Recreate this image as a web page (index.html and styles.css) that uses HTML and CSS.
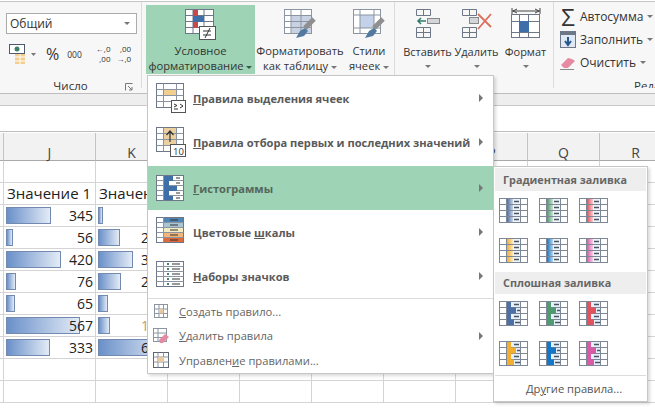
FILE: index.html
```html
<!DOCTYPE html>
<html lang="ru">
<head>
    <meta charset="UTF-8">
    <title>Условное форматирование</title>
    <link rel="stylesheet" href="styles.css">
</head>
<body>
    <svg class="defs" width="0" height="0">
        <defs>
            <linearGradient id="barFade" x1="0" x2="1" y1="0" y2="0">
                <stop offset="0" stop-color="#fff" stop-opacity="0"/>
                <stop offset="1" stop-color="#fff" stop-opacity=".7"/>
            </linearGradient>
            <symbol id="gallery" viewBox="0 0 30 25">
                <rect x=".5" y=".5" width="28" height="24" fill="#fff" stroke="#7d8795"/>
                <rect x="8" y="1" width="13" height="23" fill="#e6f0fa"/>
                <path d="M.5 6.500h28M.5 12.500h28M.5 18.500h28M7.500 .5v24M21.500 .5v24" stroke="#7d8795" fill="none"/>
                <path d="M8 1h4v5.500h5v6h-5v6h3v5.500H8z" fill="currentColor"/>
                <path d="M15 3.500h5M18 9.500h3M15 15.500h5M16 21.500h5" stroke="#4a5360" stroke-width="1.500"/>
            </symbol>
            <symbol id="galleryFade" viewBox="0 0 30 25">
                <rect x=".5" y=".5" width="28" height="24" fill="#fff" stroke="#7d8795"/>
                <rect x="8" y="1" width="13" height="23" fill="#eef4fa"/>
                <rect x="8" y="1" width="6" height="23" fill="currentColor"/>
                <rect x="8" y="1" width="6" height="23" fill="url(#barFade)"/>
                <path d="M.5 6.500h28M.5 12.500h28M.5 18.500h28M7.500 .5v24M21.500 .5v24" stroke="#7d8795" fill="none"/>
                <path d="M15 3.500h5M15 9.500h5M15 15.500h5M15 21.500h5" stroke="#4a5360" stroke-width="1.500"/>
            </symbol>
        </defs>
    </svg>

    <div class="top-rule"></div>
    <div class="ribbon">
        <section class="group group-number">
            <div class="format-select">Общий <span class="caret"></span></div>
            <div class="number-tools">
                <svg class="tool" width="27" height="20" viewBox="0 0 27 20">
                    <rect x=".5" y=".5" width="15" height="9" fill="#fff" stroke="#4c5a6c"/>
                    <circle cx="8" cy="5" r="2.500" fill="#3f7f6a"/>
                    <rect x="6" y="10" width="10" height="10" fill="#f2cf8f"/>
                    <path d="M6 13h10M6 17h10M11 10v10" stroke="#fff"/>
                    <path d="M22 9h5l-2.500 3z" fill="#777"/>
                </svg>
                <span class="percent">%</span>
                <span class="thousands">000</span>
                <span class="tool-sep"></span>
                <span class="decimals"><b>←,0</b><b>,00</b></span>
                <span class="decimals"><b>,00</b><b>→,0</b></span>
            </div>
            <div class="group-label">Число
                <svg class="launcher" width="8" height="8" viewBox="0 0 8 8"><path d="M.5 7.500v-7h7M3 3l4 4M7 4v3H4" fill="none" stroke="#777"/></svg>
            </div>
        </section>

        <section class="group group-styles">
            <div class="big-button active">
                <svg width="32" height="31" viewBox="0 0 32 31">
                    <rect x=".5" y=".5" width="28" height="24" fill="#fff" stroke="#6d7787"/>
                    <path d="M.5 6.500h28M.5 12.500h28M.5 18.500h28M8 .5v24M19 .5v24" stroke="#6d7787" fill="none"/>
                    <path d="M8 1h5v6H8zM8 13h5v6H8z" fill="#c8494a"/>
                    <path d="M8 7h11v6H8z" fill="#3f6fa8"/>
                    <rect x="14.500" y="17.500" width="16" height="13" fill="#fff" stroke="#555"/>
                    <path d="M18 22h8M18 26h8M25 19l-5 10" stroke="#333" fill="none"/>
                </svg>
                <span>Условное</span>
                <span>форматирование <i class="caret dark"></i></span>
            </div>
            <div class="big-button">
                <svg width="32" height="31" viewBox="0 0 32 31">
                    <rect x=".5" y=".5" width="27" height="24" fill="#fff" stroke="#8b95a2"/>
                    <rect x="7" y="7" width="20" height="17" fill="#c8d2e2"/>
                    <path d="M.5 6.500h27M.5 12.500h27M.5 18.500h27M7 .5v24M17 .5v24" stroke="#8b95a2" fill="none"/>
                    <path d="M30 10L21 19" stroke="#8f8f8f" stroke-width="5"/>
                    <path d="M21 19l-5 3-4 7 8-2 4-5z" fill="#52799f"/>
                </svg>
                <span>Форматировать</span>
                <span>как таблицу <i class="caret"></i></span>
            </div>
            <div class="big-button narrow">
                <svg width="32" height="31" viewBox="0 0 32 31">
                    <rect x=".5" y=".5" width="27" height="24" fill="#fff" stroke="#8b95a2"/>
                    <rect x="7" y="6" width="14" height="13" fill="#c3d2e8"/>
                    <path d="M.5 6h27M.5 19h27M7 .5v24M21 .5v24" stroke="#8b95a2" fill="none"/>
                    <path d="M30 10L21 19" stroke="#8f8f8f" stroke-width="5"/>
                    <path d="M21 19l-5 3-4 7 8-2 4-5z" fill="#52799f"/>
                </svg>
                <span>Стили</span>
                <span>ячеек <i class="caret"></i></span>
            </div>
        </section>

        <section class="group group-cells">
            <div class="cell-button">
                <svg width="30" height="30" viewBox="0 0 30 30">
                    <path d="M3.500 1.500h14v6h-14zM3.500 19.500h14v10h-14zM3.500 24.500h14M10.500 1.500v6M10.500 19.500v10" fill="none" stroke="#6d7787"/>
                    <path d="M13 13H5M8 10l-3 3 3 3" fill="none" stroke="#2f7d6b" stroke-width="1.500"/>
                    <rect x="14.500" y="10.500" width="12" height="5" fill="#d2d6db" stroke="#888"/>
                </svg>
                <span>Вставить</span><i class="caret"></i>
            </div>
            <div class="cell-button">
                <svg width="32" height="30" viewBox="0 0 32 30">
                    <path d="M1.500 1.500h14v6h-14zM1.500 19.500h14v10h-14zM1.500 24.500h14M8.500 1.500v6M8.500 19.500v10" fill="none" stroke="#6d7787"/>
                    <rect x="8.500" y="9.500" width="9" height="6" fill="#d2d6db" stroke="#888"/>
                    <path d="M17 6l13 13M30 6L17 21" stroke="#d9705a" stroke-width="1.800"/>
                </svg>
                <span>Удалить</span><i class="caret"></i>
            </div>
            <div class="cell-button">
                <svg width="30" height="32" viewBox="0 0 30 32">
                    <path d="M1 4h28M1 1v6M29 1v6M6 2L2 4l4 2M24 2l4 2-4 2" fill="none" stroke="#444"/>
                    <rect x=".5" y="7.500" width="28" height="23" fill="#fff" stroke="#6d7787"/>
                    <path d="M.5 14.500h28M.5 25.500h28M8.500 7.500v23M17.500 7.500v23" fill="none" stroke="#6d7787"/>
                    <rect x="8" y="14" width="10" height="11" fill="#3f6fa8"/>
                </svg>
                <span>Формат</span><i class="caret"></i>
            </div>
        </section>

        <section class="group group-edit">
            <div class="edit-row">
                <span class="sigma">Σ</span><span>Автосумма</span><i class="caret"></i>
            </div>
            <div class="edit-row">
                <svg width="16" height="17" viewBox="0 0 16 17">
                    <rect x=".5" y=".5" width="15" height="16" fill="#dfe8f3" stroke="#6d7787"/>
                    <rect x="1" y="1" width="14" height="3" fill="#6d7787"/>
                    <path d="M8 6v8M5 10l3 4 3-4" fill="none" stroke="#24588f" stroke-width="2"/>
                </svg>
                <span>Заполнить</span><i class="caret"></i>
            </div>
            <div class="edit-row">
                <svg width="16" height="14" viewBox="0 0 16 14">
                    <path d="M1 9l7-7 4 1 3 2-7 7H4z" fill="#e58aa2"/>
                    <path d="M0 13.500h14" stroke="#888"/>
                </svg>
                <span>Очистить</span><i class="caret"></i>
            </div>
            <div class="group-label edit-label">Редактирование</div>
        </section>
    </div>

    <div class="ribbon-gap"></div>
    <div class="formula-bar"></div>

    <div class="sheet">
        <div class="corner"></div>
        <div class="col-head wide">J</div>
        <div class="col-head">K</div>
        <div class="col-head"></div>
        <div class="col-head"></div>
        <div class="col-head"></div>
        <div class="col-head"></div>
        <div class="col-head">P</div>
        <div class="col-head">Q</div>
        <div class="col-head">R</div>

        <div class="row"><div class="cell first"></div><div class="cell wide"></div><div class="cell"></div><div class="cell"></div><div class="cell"></div><div class="cell"></div><div class="cell"></div><div class="cell"></div><div class="cell"></div><div class="cell"></div></div>
        <div class="row"><div class="cell first"></div><div class="cell wide value title">Значение 1</div><div class="cell value title">Значение 2</div><div class="cell"></div><div class="cell"></div><div class="cell"></div><div class="cell"></div><div class="cell"></div><div class="cell"></div><div class="cell"></div></div>
        <div class="row"><div class="cell first"></div><div class="cell wide value"><span class="bar" style="width:45px"></span>345</div><div class="cell value"><span class="bar" style="width:5px"></span>67</div><div class="cell"></div><div class="cell"></div><div class="cell"></div><div class="cell"></div><div class="cell"></div><div class="cell"></div><div class="cell"></div></div>
        <div class="row"><div class="cell first"></div><div class="cell wide value"><span class="bar" style="width:7px"></span>56</div><div class="cell value"><span class="bar" style="width:22px"></span>234</div><div class="cell"></div><div class="cell"></div><div class="cell"></div><div class="cell"></div><div class="cell"></div><div class="cell"></div><div class="cell"></div></div>
        <div class="row"><div class="cell first"></div><div class="cell wide value"><span class="bar" style="width:55px"></span>420</div><div class="cell value"><span class="bar" style="width:35px"></span>345</div><div class="cell"></div><div class="cell"></div><div class="cell"></div><div class="cell"></div><div class="cell"></div><div class="cell"></div><div class="cell"></div></div>
        <div class="row"><div class="cell first"></div><div class="cell wide value"><span class="bar" style="width:10px"></span>76</div><div class="cell value"><span class="bar" style="width:23px"></span>234</div><div class="cell"></div><div class="cell"></div><div class="cell"></div><div class="cell"></div><div class="cell"></div><div class="cell"></div><div class="cell"></div></div>
        <div class="row"><div class="cell first"></div><div class="cell wide value"><span class="bar" style="width:9px"></span>65</div><div class="cell value"><span class="bar" style="width:10px"></span>87</div><div class="cell"></div><div class="cell"></div><div class="cell"></div><div class="cell"></div><div class="cell"></div><div class="cell"></div><div class="cell"></div></div>
        <div class="row"><div class="cell first"></div><div class="cell wide value"><span class="bar" style="width:74px"></span>567</div><div class="cell value"><span class="bar" style="width:12px"></span><span class="faint">123</span></div><div class="cell"></div><div class="cell"></div><div class="cell"></div><div class="cell"></div><div class="cell"></div><div class="cell"></div><div class="cell"></div></div>
        <div class="row"><div class="cell first"></div><div class="cell wide value"><span class="bar" style="width:44px"></span>333</div><div class="cell value"><span class="bar" style="width:70px"></span>678</div><div class="cell"></div><div class="cell"></div><div class="cell"></div><div class="cell"></div><div class="cell"></div><div class="cell"></div><div class="cell"></div></div>
        <div class="row"><div class="cell first"></div><div class="cell wide"></div><div class="cell"></div><div class="cell"></div><div class="cell"></div><div class="cell"></div><div class="cell"></div><div class="cell"></div><div class="cell"></div><div class="cell"></div></div>
        <div class="row"><div class="cell first"></div><div class="cell wide"></div><div class="cell"></div><div class="cell"></div><div class="cell"></div><div class="cell"></div><div class="cell"></div><div class="cell"></div><div class="cell"></div><div class="cell"></div></div>
    </div>

    <div class="menu">
        <div class="menu-big">
            <svg width="30" height="30" viewBox="0 0 30 30">
                <rect x=".5" y=".5" width="27" height="24" fill="#fff" stroke="#6d7787"/>
                <rect x="8" y="6" width="13" height="7" fill="#f3cf8e"/>
                <path d="M.5 6.500h27M.5 12.500h27M.5 18.500h27M7.500 .5v24M20.500 .5v24" stroke="#8b95a2" fill="none"/>
                <rect x="15.500" y="17.500" width="14" height="12" fill="#fff" stroke="#555"/>
                <path d="M18 21l3 1.500-3 1.500M18 26h4M24 21l3 2-3 2" stroke="#333" fill="none"/>
            </svg>
            <span class="menu-text"><u>П</u>равила выделения ячеек</span><i class="arrow"></i>
        </div>
        <div class="menu-big">
            <svg width="30" height="30" viewBox="0 0 30 30">
                <rect x=".5" y=".5" width="27" height="24" fill="#fff" stroke="#6d7787"/>
                <rect x="8" y="1" width="12" height="18" fill="#eccf9f"/>
                <path d="M.5 6.500h27M.5 12.500h27M.5 18.500h27M7.500 .5v24M20.500 .5v24" stroke="#8b95a2" fill="none"/>
                <path d="M14 15V4M10.500 8L14 4l3.500 4" fill="none" stroke="#333" stroke-width="1.200"/>
                <rect x="14.500" y="17.500" width="15" height="12" fill="#fff" stroke="#555"/>
            </svg>
            <span class="mini-ten">10</span>
            <span class="menu-text"><u>П</u>равила отбора первых и последних значений</span><i class="arrow"></i>
        </div>
        <div class="menu-big selected">
            <svg width="30" height="30" viewBox="0 0 30 30">
                <rect x=".5" y="2.500" width="27" height="25" fill="#fff" stroke="#6d7787"/>
                <path d="M.5 7.500h27M.5 12.500h27M.5 17.500h27M.5 22.500h27M7.500 2.500v25" stroke="#8b95a2" fill="none"/>
                <path d="M8 3h9v5h-4v5h8v5h-8v5h4v4H8z" fill="#3f6fa8"/>
                <path d="M20 5h4M20 10h4M20 20h4M20 25h4" stroke="#333" fill="none"/>
            </svg>
            <span class="menu-text"><u>Г</u>истограммы</span><i class="arrow"></i>
        </div>
        <div class="menu-big">
            <svg width="30" height="30" viewBox="0 0 30 30">
                <rect x=".5" y=".5" width="27" height="25" fill="#fff" stroke="#6d7787"/>
                <rect x="8" y="1" width="19" height="5" fill="#4f86b5"/>
                <rect x="8" y="6" width="19" height="5" fill="#a9c4d2"/>
                <rect x="8" y="11" width="19" height="5" fill="#f5edc2"/>
                <rect x="8" y="16" width="19" height="5" fill="#f2b679"/>
                <rect x="8" y="21" width="19" height="4" fill="#dc6a3d"/>
                <path d="M.5 5.500h27M.5 10.500h27M.5 15.500h27M.5 20.500h27M7.500 .5v25" stroke="#8b95a2" fill="none"/>
                <path d="M14 3h8M14 8h8M14 13h8M14 18h8M14 23h8" stroke="#333" fill="none"/>
            </svg>
            <span class="menu-text">Цветовые <u>ш</u>калы</span><i class="arrow"></i>
        </div>
        <div class="menu-big">
            <svg width="30" height="30" viewBox="0 0 30 30">
                <rect x=".5" y=".5" width="27" height="25" fill="#fff" stroke="#6d7787"/>
                <path d="M.5 5.500h27M.5 10.500h27M.5 15.500h27M.5 20.500h27M7.500 .5v25" stroke="#8b95a2" fill="none"/>
                <path d="M11 3h2M11 8h2M11 13h2M11 18h2M11 23h2" stroke="#49806b" stroke-width="2"/>
                <path d="M16 3h8M16 8h8M16 13h8M16 18h8M16 23h8" stroke="#333" fill="none"/>
            </svg>
            <span class="menu-text"><u>Н</u>аборы значков</span><i class="arrow"></i>
        </div>
        <div class="menu-line"></div>
        <div class="menu-small">
            <svg width="14" height="14" viewBox="0 0 14 14">
                <rect x=".5" y=".5" width="13" height="13" fill="#fff" stroke="#8b95a2"/>
                <path d="M.5 5h13M.5 9.500h13M5 .5v13M9.500 .5v13" stroke="#8b95a2" fill="none"/>
                <rect x="5" y="5" width="4.500" height="4.500" fill="#e9c9a0"/>
            </svg>
            <span><u>С</u>оздать правило...</span>
        </div>
        <div class="menu-small">
            <svg width="16" height="16" viewBox="0 0 16 16">
                <rect x=".5" y=".5" width="13" height="13" fill="#fff" stroke="#8b95a2"/>
                <path d="M.5 5h13M.5 9.500h13M5 .5v13" stroke="#8b95a2" fill="none"/>
                <path d="M6 12l6-6 4 3-6 6H7z" fill="#e58aa2"/>
            </svg>
            <span><u>У</u>далить правила</span><i class="arrow"></i>
        </div>
        <div class="menu-small">
            <svg width="16" height="16" viewBox="0 0 16 16">
                <rect x=".5" y=".5" width="15" height="15" fill="#fff" stroke="#5c6672"/>
                <path d="M.5 5h15M.5 10h15M5 .5v15M10.500 .5v15" stroke="#8b95a2" fill="none"/>
                <rect x="5" y="5" width="6" height="5" fill="#e9c9a0"/>
            </svg>
            <span>Управлен<u>и</u>е правилами...</span>
        </div>
    </div>

    <div class="submenu">
        <div class="sub-head">Градиентная заливка</div>
        <div class="swatches">
            <svg class="swatch c-blue"><use href="#galleryFade"/></svg>
            <svg class="swatch c-green"><use href="#galleryFade"/></svg>
            <svg class="swatch c-red"><use href="#galleryFade"/></svg>
            <svg class="swatch c-orange"><use href="#galleryFade"/></svg>
            <svg class="swatch c-sky"><use href="#galleryFade"/></svg>
            <svg class="swatch c-pink"><use href="#galleryFade"/></svg>
        </div>
        <div class="sub-head second">Сплошная заливка</div>
        <div class="swatches">
            <svg class="swatch c-blue"><use href="#gallery"/></svg>
            <svg class="swatch c-green"><use href="#gallery"/></svg>
            <svg class="swatch c-red"><use href="#gallery"/></svg>
            <svg class="swatch c-orange"><use href="#gallery"/></svg>
            <svg class="swatch c-sky"><use href="#gallery"/></svg>
            <svg class="swatch c-pink"><use href="#gallery"/></svg>
        </div>
        <div class="sub-line"></div>
        <div class="sub-more">Др<u>у</u>гие правила...</div>
    </div>
</body>
</html>
```

FILE: styles.css
```css
html, body {
    margin: 0;
    padding: 0;
}
body {
    position: relative;
    width: 655px;
    height: 411px;
    overflow: hidden;
    background-color: #fff;
    font-family: "Open Sans", "Noto Sans", sans-serif;
    font-size: 11px;
    color: #444;
}
.defs {
    position: absolute;
}
.top-rule {
    height: 2px;
    background-color: #c6c6c6;
    border-top: 1px solid #fff;
    box-sizing: border-box;
}
.ribbon {
    display: flex;
    height: 92px;
    box-sizing: border-box;
    background-color: #f7f7f7;
    border-bottom: 1px solid #bdbdbd;
}
.group {
    display: flex;
    box-sizing: border-box;
    border-right: 1px solid #dcdcdc;
    margin-bottom: 5px;
}
.group-label {
    position: absolute;
    left: 0;
    right: 0;
    top: 76px;
    text-align: center;
    font-size: 11.500px;
    color: #333;
}
.group-number {
    position: relative;
    flex-direction: column;
    width: 142px;
    padding: 11px 5px 0 6px;
}
.format-select {
    display: flex;
    align-items: center;
    justify-content: space-between;
    height: 21px;
    width: 131px;
    padding: 0 6px 0 3px;
    box-sizing: border-box;
    background-color: #fff;
    border: 1px solid #ababab;
    font-size: 12px;
    color: #333;
}
.number-tools {
    display: flex;
    align-items: center;
    height: 26px;
    margin-top: 7px;
    padding-left: 3px;
}
.tool {
    flex: none;
    margin-right: 10px;
}
.percent {
    font-size: 16px;
    margin-right: 8px;
    color: #333;
}
.thousands {
    font-size: 8.500px;
    margin-right: 8px;
    color: #333;
}
.tool-sep {
    width: 1px;
    height: 22px;
    background-color: #dedede;
    margin-right: 6px;
}
.decimals {
    display: flex;
    flex-direction: column;
    font-size: 8px;
    line-height: 10px;
    text-align: right;
    margin-right: 6px;
    color: #333;
}
.decimals b {
    font-weight: 400;
}
.launcher {
    position: absolute;
    right: 8px;
    top: 5px;
}
.caret {
    display: inline-block;
    width: 0;
    height: 0;
    border-left: 3px solid transparent;
    border-right: 3px solid transparent;
    border-top: 3px solid #777;
    vertical-align: middle;
}
.caret.dark {
    border-top-color: #2f5d48;
}
.group-styles {
    padding: 3px 1px 0 4px;
    width: 253px;
}
.big-button {
    display: flex;
    flex-direction: column;
    align-items: center;
    width: 90px;
    height: 69px;
    padding-top: 4px;
    box-sizing: border-box;
    font-size: 11.200px;
    line-height: 15px;
    color: #333;
    white-space: nowrap;
}
.big-button svg {
    height: 31px;
    margin-bottom: 3px;
    flex: none;
}
.big-button.active {
    width: 109px;
    background-color: #9ed3b5;
}
.big-button.narrow {
    width: 48px;
}
.group-cells {
    width: 159px;
    padding: 5px 0 0 8px;
}
.cell-button {
    display: flex;
    flex-direction: column;
    align-items: center;
    width: 49px;
    font-size: 11px;
    color: #333;
    white-space: nowrap;
}
.cell-button svg {
    flex: none;
    height: 32px;
    margin-bottom: 5px;
}
.cell-button .caret {
    margin-top: 6px;
}
.group-edit {
    position: relative;
    flex: 1;
    flex-direction: column;
    border-right: 0;
    padding: 3px 0 0 6px;
    overflow: hidden;
}
.edit-row {
    display: flex;
    align-items: center;
    gap: 4px;
    height: 23px;
    font-size: 12px;
    color: #333;
    white-space: nowrap;
}
.edit-row svg {
    flex: none;
}
.sigma {
    width: 16px;
    font-size: 24px;
    line-height: 20px;
    text-align: center;
    color: #333;
}
.edit-label {
    left: 80px;
    right: auto;
    white-space: nowrap;
}
.ribbon-gap {
    height: 11px;
    background-color: #eeeeee;
    border-bottom: 1px solid #c9c9c9;
}
.formula-bar {
    height: 25px;
    background-color: #fff;
    border-bottom: 1px solid #bdbdbd;
}
.sheet {
    display: grid;
    grid-template-columns: 4px 92px repeat(8, 72px);
    grid-template-rows: 28px;
    grid-auto-rows: 22px;
    margin-top: 1px;
}
.corner, .col-head {
    box-sizing: border-box;
    background-color: #f2f2f2;
    border-bottom: 1px solid #a9a9a9;
    border-right: 1px solid #c4c4c4;
}
.col-head {
    text-align: center;
    line-height: 40px;
    font-size: 14px;
    color: #444;
}
.row {
    display: contents;
}
.cell {
    position: relative;
    box-sizing: border-box;
    border-right: 1px solid #d4d4d4;
    border-bottom: 1px solid #d4d4d4;
    font-size: 14px;
    color: #222;
    white-space: nowrap;
    overflow: hidden;
}
.value {
    line-height: 21px;
    text-align: right;
    padding-right: 2px;
    z-index: 0;
}
.value.title {
    text-align: left;
    padding: 0 0 0 3px;
    font-size: 15px;
}
.faint {
    color: #c89a6a;
}
.bar {
    position: absolute;
    left: 2px;
    top: 2px;
    height: 17px;
    box-sizing: border-box;
    background: linear-gradient(90deg, #6a90c9, #e3ebf6);
    border: 1px solid #7289b0;
    z-index: -1;
}
.menu {
    position: absolute;
    left: 147px;
    top: 75px;
    width: 347px;
    height: 299px;
    box-sizing: border-box;
    background-color: #fff;
    border: 1px solid #c6c6c6;
    box-shadow: 2px 2px 3px rgba(0,0,0,0.15);
    z-index: 2;
}
.menu-big {
    position: relative;
    display: flex;
    align-items: center;
    height: 44px;
    padding-left: 8px;
    font-size: 11.100px;
    font-weight: 700;
    color: #5a5a5a;
}
.menu-big svg {
    flex: none;
    margin-right: 7px;
}
.menu-big.selected {
    background-color: #9ed3b5;
    margin-top: 2px;
    color: #55665c;
}
.mini-ten {
    position: absolute;
    left: 25px;
    top: 25px;
    font-size: 9.500px;
    font-weight: 400;
    color: #333;
}
.menu-text {
    flex: 1;
    white-space: nowrap;
}
.arrow {
    flex: none;
    width: 0;
    height: 0;
    margin-right: 10px;
    border-top: 4px solid transparent;
    border-bottom: 4px solid transparent;
    border-left: 4px solid #777;
}
.menu-line {
    height: 1px;
    background-color: #dcdcdc;
}
.menu-small {
    display: flex;
    align-items: center;
    height: 24.500px;
    padding-left: 5px;
    font-size: 11.200px;
    color: #666;
    white-space: nowrap;
}
.menu-small svg {
    flex: none;
    width: 16px;
    margin-right: 10px;
}
.menu-small span {
    flex: 1;
}
.submenu {
    position: absolute;
    left: 493px;
    top: 166px;
    width: 155px;
    height: 236px;
    box-sizing: border-box;
    background-color: #fff;
    border: 1px solid #c6c6c6;
    box-shadow: 2px 2px 3px rgba(0,0,0,0.15);
    padding: 1px;
    z-index: 3;
}
.sub-head {
    height: 23px;
    line-height: 23px;
    padding-left: 8px;
    background-color: #eeeeee;
    font-size: 10.800px;
    font-weight: 700;
    color: #666;
}
.sub-head.second {
    height: 22px;
    line-height: 22px;
}
.swatches {
    display: grid;
    grid-template-columns: repeat(3, 30px);
    column-gap: 10px;
    row-gap: 15px;
    padding: 7px 0 9px 4px;
}
.swatch {
    display: block;
    width: 30px;
    height: 25px;
}
.c-blue { color: #4c6fa5; }
.c-green { color: #4f9a6e; }
.c-red { color: #e2525c; }
.c-orange { color: #f3ae2e; }
.c-sky { color: #1376c9; }
.c-pink { color: #db5aa5; }
.sub-line {
    height: 1px;
    background-color: #dcdcdc;
}
.sub-more {
    padding-left: 7px;
    text-align: center;
    line-height: 26px;
    font-size: 11.200px;
    color: #555;
}
```
